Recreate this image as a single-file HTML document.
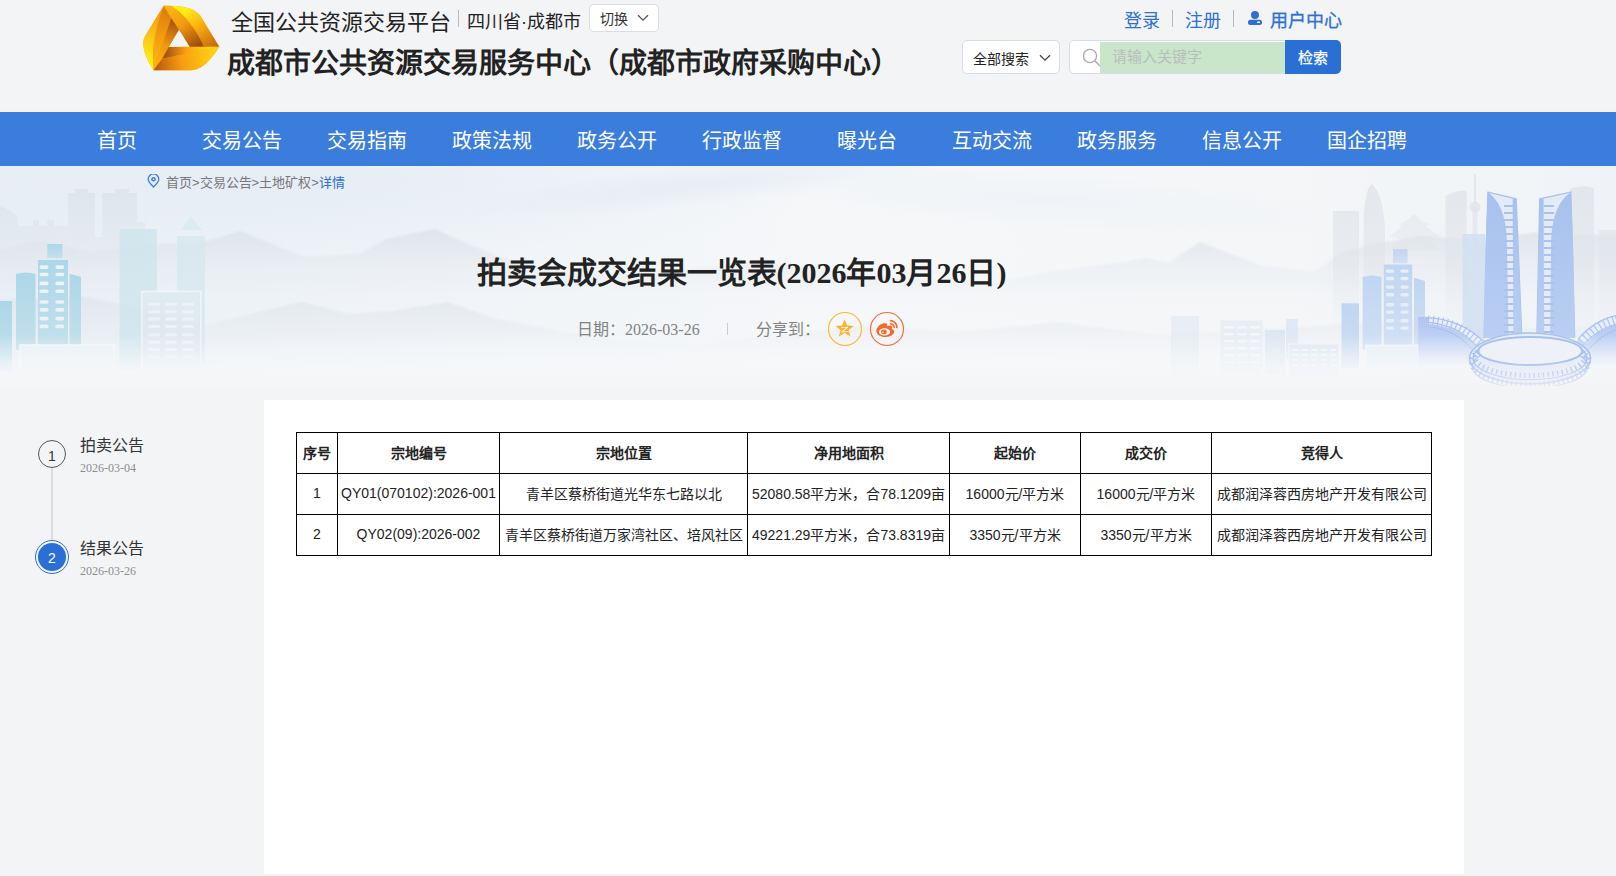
<!DOCTYPE html>
<html lang="zh-CN">
<head>
<meta charset="utf-8">
<title>拍卖会成交结果一览表</title>
<style>
html,body{margin:0;padding:0;}
body{width:1616px;height:876px;overflow:hidden;position:relative;background:#f3f4f6;font-family:"Liberation Sans",sans-serif;color:#333;}
.abs{position:absolute;white-space:nowrap;}
.serif{font-family:"Liberation Serif",serif;}
/* header */
#logo{left:140px;top:2px;width:82px;height:72px;}
#plat{left:231px;top:8px;font-size:22px;line-height:30px;color:#222;}
#sep1{left:458px;top:10px;width:1px;height:17px;background:#bbb;}
#city{left:467px;top:8px;font-size:18px;line-height:28px;color:#222;}
#switch{left:589px;top:4px;width:68px;height:26px;border:1px solid #d9dde6;border-radius:5px;background:#fff;}
#switch span{position:absolute;left:10px;top:5px;font-size:14px;line-height:18px;color:#333;}
#switch svg{position:absolute;left:47px;top:9px;}
#bigtitle{left:227px;top:45px;font-size:28px;line-height:38px;font-weight:bold;color:#222;}
.tl{position:absolute;top:7px;font-size:18px;line-height:28px;color:#2f6fd4;white-space:nowrap;}
.vsep{position:absolute;top:10px;width:1px;height:17px;background:#b5b8c0;}
#selbox{left:962px;top:40px;width:96px;height:32px;border:1px solid #d8dce6;border-radius:5px;background:#fff;}
#selbox span{position:absolute;left:10px;top:8px;font-size:14px;line-height:20px;color:#222;}
#selbox svg{position:absolute;left:76px;top:13px;}
#sinput{left:1069px;top:40px;width:230px;height:32px;border:1px solid #d8dce6;border-radius:5px 0 0 5px;background:#fff;}
#sinput svg{position:absolute;left:12px;top:7px;}
#sgreen{left:1100px;top:42px;width:185px;height:31px;background:#c9e6ca;}
#sgreen span{position:absolute;left:12px;top:5px;font-size:15px;line-height:20px;color:#b9bdbf;}
#sbtn{left:1285px;top:40px;width:56px;height:34px;background:#2a6fd4;border-radius:0 5px 5px 0;color:#fff;font-size:15px;}
#sbtn span{position:absolute;left:13px;top:8px;line-height:20px;-webkit-text-stroke:0.25px #fff;}
/* nav */
#nav{left:0;top:112px;width:1616px;height:54px;background:#3a7ddd;}
.ni{position:absolute;top:0;width:125px;text-align:center;color:#fff;font-size:20px;line-height:59px;}
/* banner */
#banner{left:0;top:166px;width:1616px;height:234px;}
#crumb{left:166px;top:174px;font-size:13px;line-height:18px;color:#777;}
#pin{left:147px;top:174px;}
#title{left:0;top:251px;width:1483px;text-align:center;font-size:30px;line-height:44px;font-weight:bold;color:#222;}
#meta{left:577px;top:319px;font-size:16px;line-height:22px;color:#828282;}
#msep{left:727px;top:323px;width:1px;height:12px;background:#ccc;}
#share{left:756px;top:319px;font-size:16px;line-height:22px;color:#828282;}
#qq{left:827px;top:311px;}
#wb{left:869px;top:311px;}
/* panel */
#panel{left:264px;top:400px;width:1200px;height:474px;background:#fff;}
table{position:absolute;left:32px;top:32px;border-collapse:collapse;table-layout:fixed;font-size:14px;color:#222;}
td{border:1px solid #000;height:40px;padding:0;text-align:center;white-space:nowrap;overflow:hidden;}
th{border:1px solid #000;height:40px;padding:0;text-align:center;font-weight:bold;}
th span,td span{position:relative;top:-1px;}
/* steps */
#steps .c1{position:absolute;left:38px;top:440px;width:26px;height:26px;border:1px solid #555;border-radius:50%;text-align:center;font-size:14px;line-height:30px;color:#333;}
#steps .line{position:absolute;left:51px;top:468px;width:2px;height:72px;background:#ddd;}
#steps .c2{position:absolute;left:35px;top:540px;width:34px;height:34px;border-radius:50%;border:1px solid #2a6fd6;box-sizing:border-box;}
#steps .c2 i{position:absolute;left:2px;top:2px;width:28px;height:28px;border-radius:50%;background:#2a6fd6;color:#fff;font-style:normal;text-align:center;font-size:14px;line-height:30px;}
#steps .t{position:absolute;left:80px;font-size:16px;line-height:22px;color:#333;}
#steps .d{position:absolute;left:80px;font-size:12px;line-height:16px;color:#8c8c8c;font-family:"Liberation Serif",serif;}
</style>
</head>
<body>
<!-- HEADER -->
<svg id="logo" class="abs" viewBox="0 0 998 876">
  <defs>
    <linearGradient id="gL1" gradientUnits="userSpaceOnUse" x1="60" y1="720" x2="300" y2="150"><stop offset="0" stop-color="#fff010"/><stop offset="0.45" stop-color="#fdc816"/><stop offset="1" stop-color="#f29a10"/></linearGradient>
    <linearGradient id="gL3" gradientUnits="userSpaceOnUse" x1="200" y1="780" x2="320" y2="120"><stop offset="0" stop-color="#fbb614"/><stop offset="0.5" stop-color="#f59e10"/><stop offset="1" stop-color="#e0800c"/></linearGradient>
    <linearGradient id="gL2" gradientUnits="userSpaceOnUse" x1="420" y1="220" x2="230" y2="720"><stop offset="0" stop-color="#a9520f"/><stop offset="0.6" stop-color="#f0960e"/><stop offset="1" stop-color="#fcac12"/></linearGradient>
    <linearGradient id="gT1" gradientUnits="userSpaceOnUse" x1="560" y1="80" x2="900" y2="540"><stop offset="0" stop-color="#fff014"/><stop offset="0.45" stop-color="#fbb012"/><stop offset="1" stop-color="#c96a0c"/></linearGradient>
    <linearGradient id="gT2" gradientUnits="userSpaceOnUse" x1="360" y1="80" x2="700" y2="540"><stop offset="0" stop-color="#fbb414"/><stop offset="0.45" stop-color="#f39a10"/><stop offset="1" stop-color="#9e4a0e"/></linearGradient>
    <linearGradient id="gB1" gradientUnits="userSpaceOnUse" x1="300" y1="600" x2="960" y2="560"><stop offset="0" stop-color="#a24e0e"/><stop offset="0.4" stop-color="#fba012"/><stop offset="1" stop-color="#ffec10"/></linearGradient>
    <linearGradient id="gB2" gradientUnits="userSpaceOnUse" x1="180" y1="780" x2="900" y2="650"><stop offset="0" stop-color="#b8580c"/><stop offset="0.45" stop-color="#f89c10"/><stop offset="1" stop-color="#ffd212"/></linearGradient>
  </defs>
  <path d="M290 45 C500 45 640 60 730 160 L965 545 C880 680 760 830 620 830 L165 830 C40 640 25 500 50 440 C90 370 160 250 290 45 Z M475 335 L350 548 L605 545 Z" fill="#f2a010" fill-rule="evenodd"/>
  <path d="M290 45 C160 250 90 370 50 440 C25 500 40 640 165 830 Q130 450 290 45 Z" fill="url(#gL1)"/>
  <path d="M290 45 Q130 450 165 830 L380 195 Z" fill="url(#gL3)"/>
  <path d="M380 195 L475 335 L350 548 L165 830 Z" fill="url(#gL2)"/>
  <path d="M290 45 C500 45 640 60 730 160 L965 545 L780 545 Q620 200 380 48 Z" fill="url(#gT1)"/>
  <path d="M290 45 L380 48 Q620 200 780 545 L605 545 L475 335 Z" fill="url(#gT2)"/>
  <path d="M350 548 L965 545 L270 690 Z" fill="url(#gB1)"/>
  <path d="M270 690 L965 545 C880 680 760 830 620 830 L165 830 Z" fill="url(#gB2)"/>
</svg>
<div id="plat" class="abs">全国公共资源交易平台</div>
<div id="sep1" class="abs"></div>
<div id="city" class="abs">四川省·成都市</div>
<div id="switch" class="abs"><span>切换</span><svg width="12" height="8" viewBox="0 0 12 8"><path d="M1 1.2 L6 6.2 L11 1.2" fill="none" stroke="#555" stroke-width="1.3"/></svg></div>
<div id="bigtitle" class="abs">成都市公共资源交易服务中心（成都市政府采购中心）</div>

<div class="tl" style="left:1124px">登录</div>
<div class="vsep" style="left:1172px"></div>
<div class="tl" style="left:1185px">注册</div>
<div class="vsep" style="left:1233px"></div>
<svg class="abs" style="left:1247px;top:10px" width="16" height="16" viewBox="0 0 16 16"><circle cx="8" cy="5" r="4" fill="#2f6fd4"/><rect x="1" y="9.8" width="14" height="5.1" rx="2.5" fill="#2f6fd4"/><rect x="9.9" y="11.4" width="3.2" height="1.7" rx="0.8" fill="#fff"/></svg>
<div class="tl" style="left:1270px;-webkit-text-stroke:0.3px #2f6fd4">用户中心</div>
<div id="selbox" class="abs"><span>全部搜索</span><svg width="12" height="8" viewBox="0 0 12 8"><path d="M1 1.2 L6 6.2 L11 1.2" fill="none" stroke="#444" stroke-width="1.3"/></svg></div>
<div id="sinput" class="abs"><svg width="20" height="20" viewBox="0 0 20 20"><circle cx="8" cy="8" r="6.6" fill="none" stroke="#a9acb2" stroke-width="1.4"/><path d="M12.8 12.8 L18 18" stroke="#a9acb2" stroke-width="1.5"/></svg></div>
<div id="sgreen" class="abs"><span>请输入关键字</span></div>
<div id="sbtn" class="abs"><span>检索</span></div>

<!-- NAV -->
<div id="nav" class="abs">
  <div class="ni" style="left:54px">首页</div>
  <div class="ni" style="left:179px">交易公告</div>
  <div class="ni" style="left:304px">交易指南</div>
  <div class="ni" style="left:429px">政策法规</div>
  <div class="ni" style="left:554px">政务公开</div>
  <div class="ni" style="left:679px">行政监督</div>
  <div class="ni" style="left:804px">曝光台</div>
  <div class="ni" style="left:929px">互动交流</div>
  <div class="ni" style="left:1054px">政务服务</div>
  <div class="ni" style="left:1179px">信息公开</div>
  <div class="ni" style="left:1304px">国企招聘</div>
</div>

<!-- BANNER -->
<svg id="banner" class="abs" width="1616" height="234" viewBox="0 166 1616 234">
  <defs>
    <linearGradient id="bgG" x1="0" y1="0" x2="1" y2="0">
      <stop offset="0" stop-color="#e9f0f6"/><stop offset="0.25" stop-color="#f0f4f8"/><stop offset="0.5" stop-color="#f5f7f9"/><stop offset="0.8" stop-color="#f4f6f8"/><stop offset="1" stop-color="#eff3f7"/>
    </linearGradient>
    <radialGradient id="topTint" cx="0.5" cy="0.5" r="0.5">
      <stop offset="0" stop-color="#dfe8f3" stop-opacity="0.55"/><stop offset="1" stop-color="#dfe8f3" stop-opacity="0"/>
    </radialGradient>
    <linearGradient id="grayFadeL" gradientUnits="userSpaceOnUse" x1="0" y1="189" x2="0" y2="300"><stop offset="0" stop-color="#dce2ea" stop-opacity="0.75"/><stop offset="0.5" stop-color="#e0e5eb" stop-opacity="0.5"/><stop offset="1" stop-color="#e6eaf0" stop-opacity="0"/></linearGradient>
    <linearGradient id="grayFadeR" gradientUnits="userSpaceOnUse" x1="0" y1="175" x2="0" y2="330"><stop offset="0" stop-color="#dde2e9" stop-opacity="0.75"/><stop offset="0.6" stop-color="#e1e5eb" stop-opacity="0.55"/><stop offset="1" stop-color="#e6eaf0" stop-opacity="0"/></linearGradient>
    <linearGradient id="wingG" gradientUnits="userSpaceOnUse" x1="0" y1="317" x2="0" y2="372"><stop offset="0" stop-color="#aec4f2"/><stop offset="0.6" stop-color="#c9d8f5"/><stop offset="1" stop-color="#eef2f9"/></linearGradient>
    <linearGradient id="fog2" gradientUnits="userSpaceOnUse" x1="0" y1="360" x2="0" y2="392"><stop offset="0" stop-color="#f3f4f6" stop-opacity="0"/><stop offset="1" stop-color="#f3f4f6" stop-opacity="0.9"/></linearGradient>
    <linearGradient id="mtnFar" gradientUnits="userSpaceOnUse" x1="0" y1="228" x2="0" y2="305"><stop offset="0" stop-color="#d9e0e8" stop-opacity="0.75"/><stop offset="0.45" stop-color="#e1e6ec" stop-opacity="0.45"/><stop offset="1" stop-color="#e8ecf0" stop-opacity="0"/></linearGradient>
    <linearGradient id="mtnNear" gradientUnits="userSpaceOnUse" x1="0" y1="296" x2="0" y2="360"><stop offset="0" stop-color="#dde3e9" stop-opacity="0.7"/><stop offset="0.5" stop-color="#e4e8ed" stop-opacity="0.4"/><stop offset="1" stop-color="#eceff2" stop-opacity="0"/></linearGradient>
    <filter id="soft" x="-5%" y="-20%" width="110%" height="140%"><feGaussianBlur stdDeviation="1.2"/></filter>
    <linearGradient id="fog" x1="0" y1="0" x2="0" y2="1">
      <stop offset="0" stop-color="#f6f8fa" stop-opacity="0"/><stop offset="0.6" stop-color="#f6f8fa" stop-opacity="0.8"/><stop offset="0.92" stop-color="#f5f6f8" stop-opacity="1"/><stop offset="1" stop-color="#f3f4f6" stop-opacity="1"/>
    </linearGradient>
    <linearGradient id="cyanG" x1="0" y1="0" x2="0" y2="1">
      <stop offset="0" stop-color="#acd7e8"/><stop offset="1" stop-color="#c4e0ec"/>
    </linearGradient>
    <linearGradient id="blueG" x1="0" y1="0" x2="0" y2="1">
      <stop offset="0" stop-color="#a7c1ee"/><stop offset="1" stop-color="#b9cff2"/>
    </linearGradient>
    <linearGradient id="lblueG" x1="0" y1="0" x2="0" y2="1">
      <stop offset="0" stop-color="#bfd5f1"/><stop offset="1" stop-color="#d2e1f3"/>
    </linearGradient>
  </defs>
  <rect x="0" y="166" width="1616" height="234" fill="url(#bgG)"/>
  <ellipse cx="300" cy="180" rx="520" ry="90" fill="url(#topTint)"/>
  <ellipse cx="700" cy="185" rx="260" ry="22" transform="rotate(-6 700 185)" fill="url(#topTint)"/>
  <ellipse cx="1050" cy="200" rx="300" ry="28" transform="rotate(4 1050 200)" fill="url(#topTint)" opacity="0.5"/>
  <!-- mountains far -->
  <path d="M0 250 L40 240 L90 252 L150 244 L200 243 L240 231 L277 246 L302 256 L330 256 L361 253 L386 239 L435 229 L457 239 L478 248 L497 256 L540 268 L602 274 L680 270 L760 262 L840 272 L930 280 L1000 282 L1052 271 L1118 263 L1147 258 L1168 263 L1200 242 L1228 253 L1263 266 L1315 271 L1341 253 L1368 245 L1420 236 L1480 240 L1540 232 L1616 236 V400 H0 Z" fill="url(#mtnFar)" filter="url(#soft)"/>
  <!-- mountains near -->
  <path d="M0 300 L80 296 L150 310 L200 327 L262 311 L302 302 L349 314 L392 311 L447 302 L494 318 L540 327 L602 339 L695 345 L780 335 L860 326 L960 332 L1060 322 L1160 335 L1280 328 L1400 320 L1500 330 L1616 326 V400 H0 Z" fill="url(#mtnNear)" filter="url(#soft)"/>
  <!-- left gray back buildings -->
  <g fill="url(#grayFadeL)">
    <path d="M0 205 L18 216 L18 226 L33 226 L33 220 L39 220 L39 226 L47 226 L47 220 L54 220 L54 226 L68 226 L68 193 L75 193 L75 189 L88 189 L88 193 L95 193 L95 237 L102 237 L102 193 L115 193 L115 189 L129 189 L129 193 L137 193 L137 222 L145 222 L145 320 L0 320 Z"/>
  </g>
  <!-- left cyan buildings -->
  <g fill="url(#cyanG)">
    <rect x="0" y="301" width="12" height="70"/>
    <path d="M16 274 Q26 271 35.5 274 L35.5 350 L16 350 Z"/>
    <rect x="38" y="260" width="30" height="90"/>
    <rect x="47.3" y="244" width="15.2" height="14"/>
    <path d="M69.6 273.7 L81 277 L81 350 L69.6 350 Z"/>
  </g>
  <g fill="#eaf4f8">
    <rect x="39.5" y="265.3" width="9" height="3.6" rx="1.8"/><rect x="55.3" y="265.3" width="9" height="3.6" rx="1.8"/>
    <rect x="39.5" y="272.7" width="9" height="3.6" rx="1.8"/><rect x="55.3" y="272.7" width="9" height="3.6" rx="1.8"/>
    <rect x="39.5" y="281.6" width="9" height="3.6" rx="1.8"/><rect x="55.3" y="281.6" width="9" height="3.6" rx="1.8"/>
    <rect x="39.5" y="289.5" width="9" height="3.6" rx="1.8"/><rect x="55.3" y="289.5" width="9" height="3.6" rx="1.8"/>
    <rect x="39.5" y="300.2" width="9" height="3.6" rx="1.8"/><rect x="55.3" y="300.2" width="9" height="3.6" rx="1.8"/>
    <rect x="39.5" y="308.1" width="9" height="3.6" rx="1.8"/><rect x="55.3" y="308.1" width="9" height="3.6" rx="1.8"/>
    <rect x="39.5" y="316.8" width="9" height="3.6" rx="1.8"/><rect x="55.3" y="316.8" width="9" height="3.6" rx="1.8"/>
    <rect x="39.5" y="324.6" width="9" height="3.6" rx="1.8"/><rect x="55.3" y="324.6" width="9" height="3.6" rx="1.8"/>
  </g>
  <rect x="20" y="345" width="94" height="25" fill="#e8f0f5" stroke="#f4f8fa" stroke-width="1.5"/>
  <g opacity="0.75">
    <rect x="119.5" y="229" width="37.5" height="140" fill="#cde5ee"/>
    <path d="M181 230 L191 216 L202 230 Z" fill="#d8eaf1"/>
    <rect x="177" y="236" width="28" height="130" fill="#d6e8f0"/>
    <rect x="141.8" y="291.5" width="59" height="78" fill="#dbe8ef" stroke="#f2f6f9" stroke-width="1.5"/>
  </g>
  <g fill="#eef4f7" opacity="0.9">
    <rect x="148" y="302.8" width="12" height="3" rx="1.5"/><rect x="165" y="302.8" width="12" height="3" rx="1.5"/><rect x="182" y="302.8" width="12" height="3" rx="1.5"/>
    <rect x="148" y="310.2" width="12" height="3" rx="1.5"/><rect x="165" y="310.2" width="12" height="3" rx="1.5"/><rect x="182" y="310.2" width="12" height="3" rx="1.5"/>
    <rect x="148" y="317.5" width="12" height="3" rx="1.5"/><rect x="165" y="317.5" width="12" height="3" rx="1.5"/><rect x="182" y="317.5" width="12" height="3" rx="1.5"/>
    <rect x="148" y="324.9" width="12" height="3" rx="1.5"/><rect x="165" y="324.9" width="12" height="3" rx="1.5"/><rect x="182" y="324.9" width="12" height="3" rx="1.5"/>
    <rect x="148" y="333.3" width="12" height="3" rx="1.5"/><rect x="165" y="333.3" width="12" height="3" rx="1.5"/><rect x="182" y="333.3" width="12" height="3" rx="1.5"/>
    <rect x="148" y="340.7" width="12" height="3" rx="1.5"/><rect x="165" y="340.7" width="12" height="3" rx="1.5"/><rect x="182" y="340.7" width="12" height="3" rx="1.5"/>
    <rect x="148" y="348" width="12" height="3" rx="1.5"/><rect x="165" y="348" width="12" height="3" rx="1.5"/><rect x="182" y="348" width="12" height="3" rx="1.5"/>
    <rect x="148" y="355.4" width="12" height="3" rx="1.5"/><rect x="165" y="355.4" width="12" height="3" rx="1.5"/><rect x="182" y="355.4" width="12" height="3" rx="1.5"/>
  </g>
  <!-- middle faint buildings right-center -->
  <g opacity="0.7">
    <rect x="1171" y="316" width="28" height="60" fill="#e3ebf3"/>
    <rect x="1220" y="320" width="43" height="55" fill="#e4ecf3" stroke="#f2f5f8" stroke-width="1"/>
    <rect x="1265" y="330" width="20" height="45" fill="#d6e4f3"/>
    <rect x="1286" y="319" width="12" height="40" fill="#d8e6f4"/>
    <rect x="1289" y="344" width="50" height="32" fill="#d7e4f4" stroke="#f2f5f8" stroke-width="1"/>
  </g>
  <g fill="#f7f9fc" opacity="0.8"><rect x="1224" y="326" width="10" height="2.6" rx="1.3"/><rect x="1224" y="333" width="10" height="2.6" rx="1.3"/><rect x="1224" y="340" width="10" height="2.6" rx="1.3"/><rect x="1224" y="347" width="10" height="2.6" rx="1.3"/><rect x="1224" y="354" width="10" height="2.6" rx="1.3"/><rect x="1224" y="361" width="10" height="2.6" rx="1.3"/><rect x="1237" y="326" width="10" height="2.6" rx="1.3"/><rect x="1237" y="333" width="10" height="2.6" rx="1.3"/><rect x="1237" y="340" width="10" height="2.6" rx="1.3"/><rect x="1237" y="347" width="10" height="2.6" rx="1.3"/><rect x="1237" y="354" width="10" height="2.6" rx="1.3"/><rect x="1237" y="361" width="10" height="2.6" rx="1.3"/><rect x="1250" y="326" width="10" height="2.6" rx="1.3"/><rect x="1250" y="333" width="10" height="2.6" rx="1.3"/><rect x="1250" y="340" width="10" height="2.6" rx="1.3"/><rect x="1250" y="347" width="10" height="2.6" rx="1.3"/><rect x="1250" y="354" width="10" height="2.6" rx="1.3"/><rect x="1250" y="361" width="10" height="2.6" rx="1.3"/><rect x="1292.0" y="349" width="6.5" height="2" rx="1"/><rect x="1292.0" y="354" width="6.5" height="2" rx="1"/><rect x="1292.0" y="359" width="6.5" height="2" rx="1"/><rect x="1292.0" y="364" width="6.5" height="2" rx="1"/><rect x="1301.5" y="349" width="6.5" height="2" rx="1"/><rect x="1301.5" y="354" width="6.5" height="2" rx="1"/><rect x="1301.5" y="359" width="6.5" height="2" rx="1"/><rect x="1301.5" y="364" width="6.5" height="2" rx="1"/><rect x="1311.0" y="349" width="6.5" height="2" rx="1"/><rect x="1311.0" y="354" width="6.5" height="2" rx="1"/><rect x="1311.0" y="359" width="6.5" height="2" rx="1"/><rect x="1311.0" y="364" width="6.5" height="2" rx="1"/><rect x="1320.5" y="349" width="6.5" height="2" rx="1"/><rect x="1320.5" y="354" width="6.5" height="2" rx="1"/><rect x="1320.5" y="359" width="6.5" height="2" rx="1"/><rect x="1320.5" y="364" width="6.5" height="2" rx="1"/><rect x="1330.0" y="349" width="6.5" height="2" rx="1"/><rect x="1330.0" y="354" width="6.5" height="2" rx="1"/><rect x="1330.0" y="359" width="6.5" height="2" rx="1"/><rect x="1330.0" y="364" width="6.5" height="2" rx="1"/></g>
  <!-- right gray back buildings -->
  <g fill="url(#grayFadeR)">
    <rect x="1333" y="211" width="26" height="150"/>
    <path d="M1363.6 360 L1363.6 215 Q1366 186 1372 184 Q1384 196 1385 232 L1385 360 Z"/>
    <path d="M1445.5 360 L1445.5 196 Q1456 190 1466.6 191 L1466.6 360 Z"/>
    <rect x="1474" y="174" width="2" height="30"/>
    <circle cx="1475" cy="207" r="5.5"/>
    <rect x="1472.5" y="207" width="5" height="50"/>
    <path d="M1389 236 Q1396 232 1402 226 L1399 224 Q1408 221 1414 214 Q1420 221 1429 224 L1426 226 Q1432 232 1440 236 Q1432 238 1428 240 Q1436 244 1440 250 L1390 250 Q1394 244 1402 240 Q1396 238 1389 236 Z" opacity="0.7"/>
    <path d="M1570 360 L1570 189 Q1582 184 1594 188 L1594 360 Z"/>
    <rect x="1599" y="230" width="17" height="130"/>
  </g>
  <!-- right light blue buildings -->
  <g fill="url(#lblueG)">
    <rect x="1341.5" y="303.3" width="17.5" height="65"/>
    <path d="M1362.6 277 Q1372 274 1381.5 277 L1381.5 350 L1362.6 350 Z"/>
    <rect x="1383.8" y="264.5" width="28.4" height="85"/>
    <rect x="1393" y="249.2" width="14.5" height="14"/>
    <path d="M1414 277.6 L1425 281 L1425 350 L1414 350 Z"/>
  </g>
  <rect x="1462.6" y="234" width="22.4" height="130" fill="#cfdff0" opacity="0.8"/>
  <g fill="#e6eef8">
    <rect x="1385.8" y="269.4" width="8.4" height="3.4" rx="1.7"/><rect x="1400.3" y="269.4" width="8.4" height="3.4" rx="1.7"/>
    <rect x="1385.8" y="276.8" width="8.4" height="3.4" rx="1.7"/><rect x="1400.3" y="276.8" width="8.4" height="3.4" rx="1.7"/>
    <rect x="1385.8" y="285.4" width="8.4" height="3.4" rx="1.7"/><rect x="1400.3" y="285.4" width="8.4" height="3.4" rx="1.7"/>
    <rect x="1385.8" y="293.1" width="8.4" height="3.4" rx="1.7"/><rect x="1400.3" y="293.1" width="8.4" height="3.4" rx="1.7"/>
    <rect x="1385.8" y="303.1" width="8.4" height="3.4" rx="1.7"/><rect x="1400.3" y="303.1" width="8.4" height="3.4" rx="1.7"/>
    <rect x="1385.8" y="310.4" width="8.4" height="3.4" rx="1.7"/><rect x="1400.3" y="310.4" width="8.4" height="3.4" rx="1.7"/>
    <rect x="1385.8" y="319.1" width="8.4" height="3.4" rx="1.7"/><rect x="1400.3" y="319.1" width="8.4" height="3.4" rx="1.7"/>
    <rect x="1385.8" y="326.4" width="8.4" height="3.4" rx="1.7"/><rect x="1400.3" y="326.4" width="8.4" height="3.4" rx="1.7"/>
  </g>
  <rect x="1366" y="345.4" width="52" height="22" fill="#e6eef7" stroke="#f3f6fa" stroke-width="1.5"/>
  <!-- twin towers -->
  <path d="M1487.9 192.2 L1516.2 198.8 L1521.8 337 L1484.1 337 Z" fill="#e4ebf7" stroke="#a9c2ee" stroke-width="1.3"/>
  <path d="M1487.9 192.2 Q1505 204 1506.8 238 L1508.6 337 L1484.1 337 Q1484.5 250 1487.9 192.2 Z" fill="url(#blueG)"/>
  <path d="M1512.6 199 L1516.2 198.8 L1521.8 337 L1513.4 337 Z" fill="url(#blueG)"/>
  <path d="M1504 206 H1514 M1504 213 H1514 M1504 220 H1514 M1504 227 H1514 M1504 234 H1514 M1504 241 H1514 M1504 248 H1514 M1504 255 H1514 M1504 262 H1514 M1504 269 H1514 M1504 276 H1514 M1504 283 H1514 M1504 290 H1514 M1504 297 H1514 M1504 304 H1514 M1504 311 H1514 M1504 318 H1514 M1504 325 H1514 M1504 332 H1514" stroke="#a9c2ee" stroke-width="1.9"/>
  <path d="M1570.8 192.2 L1539.7 198.8 L1536.9 337 L1574.6 337 Z" fill="#e4ebf7" stroke="#a9c2ee" stroke-width="1.3"/>
  <path d="M1570.8 192.2 Q1553 204 1551.2 238 L1550 337 L1574.6 337 Q1574.2 250 1570.8 192.2 Z" fill="url(#blueG)"/>
  <path d="M1543.6 199 L1539.7 198.8 L1536.9 337 L1544.2 337 Z" fill="url(#blueG)"/>
  <path d="M1544 206 H1554 M1544 213 H1554 M1544 220 H1554 M1544 227 H1554 M1544 234 H1554 M1544 241 H1554 M1544 248 H1554 M1544 255 H1554 M1544 262 H1554 M1544 269 H1554 M1544 276 H1554 M1544 283 H1554 M1544 290 H1554 M1544 297 H1554 M1544 304 H1554 M1544 311 H1554 M1544 318 H1554 M1544 325 H1554 M1544 332 H1554" stroke="#a9c2ee" stroke-width="1.9"/>
  <!-- wings -->
  <path d="M1418.3 317 Q1458 315 1485 343 L1470 357 L1469 372 L1418.3 371 Z" fill="url(#wingG)"/>
  <path d="M1428 320 Q1461 322 1482 346" fill="none" stroke="#e8eef9" stroke-width="8"/>
  <path d="M1426 317.6 Q1462 319 1485 343 M1428 322.4 Q1460 325 1479 349 M1430 327 Q1458 330 1475 353" fill="none" stroke="#a9c1ee" stroke-width="1.1"/>
  <path d="M1428 320 Q1461 322 1482 346" fill="none" stroke="#a9c1ee" stroke-width="9" stroke-dasharray="1.1 3.6"/>
  <path d="M1577 341 Q1594 320 1616 316 L1616 372 L1588 368 Z" fill="url(#wingG)"/>
  <path d="M1582 342 Q1597 325 1616 320" fill="none" stroke="#e8eef9" stroke-width="8"/>
  <path d="M1578 339 Q1594 320 1616 315.5 M1583 345 Q1599 328 1616 324.5 M1588 350 Q1602 334 1616 330" fill="none" stroke="#a9c1ee" stroke-width="1.1"/>
  <path d="M1582 342 Q1597 325 1616 320" fill="none" stroke="#a9c1ee" stroke-width="9" stroke-dasharray="1.1 3.6"/>
  <!-- fog -->
  <rect x="0" y="335" width="1616" height="52" fill="url(#fog)"/>
  <!-- stadium -->
  <ellipse cx="1530" cy="358.5" rx="60.5" ry="25.5" fill="#e6ecf8" stroke="#a9c1ee" stroke-width="1.5"/>
  <ellipse cx="1530" cy="358.5" rx="56.8" ry="21.2" fill="none" stroke="#a9c1ee" stroke-width="1.2"/>
  <ellipse cx="1530" cy="362" rx="58.6" ry="22.5" fill="none" stroke="#a9c1ee" stroke-width="5" stroke-dasharray="1.3 3.4"/>
  <ellipse cx="1530" cy="357" rx="55" ry="18.5" fill="none" stroke="#a9c1ee" stroke-width="5" stroke-dasharray="1.3 3.4"/>
  <ellipse cx="1530" cy="366.5" rx="57.6" ry="21.6" fill="none" stroke="#a9c1ee" stroke-width="1.1"/>
  <ellipse cx="1530.2" cy="351" rx="52" ry="14" fill="#eef2f8" stroke="#a9c1ee" stroke-width="2"/>
  <rect x="1400" y="360" width="216" height="32" fill="url(#fog2)"/>
  <rect x="0" y="386" width="1616" height="14" fill="#f3f4f6"/>
</svg>
<svg id="pin" class="abs" width="13" height="14" viewBox="0 0 13 14"><path d="M6.5 13 C3 9.5 1.2 7.2 1.2 5.2 A5.3 5.3 0 0 1 11.8 5.2 C11.8 7.2 10 9.5 6.5 13 Z" fill="none" stroke="#3a7ddd" stroke-width="1.3"/><circle cx="6.5" cy="5.2" r="2.3" fill="#3a7ddd"/><circle cx="6.5" cy="5.2" r="0.8" fill="#fff"/></svg>
<div id="crumb" class="abs">首页&gt;交易公告&gt;土地矿权&gt;<span style="color:#2d6fd2">详情</span></div>
<div id="title" class="abs"><span class="serif">拍卖会成交结果一览表(2026年03月26日)</span></div>
<div id="meta" class="abs">日期：<span class="serif">2026-03-26</span></div>
<div id="msep" class="abs"></div>
<div id="share" class="abs">分享到：</div>
<svg id="qq" class="abs" width="36" height="36" viewBox="0 0 36 36"><circle cx="18" cy="18" r="16.5" fill="none" stroke="#fbb735" stroke-width="1.2"/><path d="M17.6 8.2 L20.1 14.6 L26.8 14.9 L21.6 19 L23.4 25.6 L17.6 22 L11.8 25.6 L13.6 19 L8.4 14.9 L15.1 14.6 Z" fill="#fbb32c"/><path d="M14.2 16.6 L20.8 16.4 L14.6 20.8 L21.6 20.6" fill="none" stroke="#fff" stroke-width="0.9"/></svg>
<svg id="wb" class="abs" width="36" height="36" viewBox="0 0 36 36"><circle cx="18" cy="18" r="16.5" fill="none" stroke="#f4703a" stroke-width="1.2"/><path d="M14 12.4 C10.6 13.2 7.4 16.6 7.4 20 C7.4 23.8 11.6 26 16.4 26 C21.8 26 25.2 23.2 25.2 20.6 C25.2 19 23.8 18.2 22.8 17.9 C23.3 16.6 23.4 15.2 22 14.7 C20.8 14.3 19.2 14.8 18.2 15.3 C18.5 14 18.4 12.9 17.4 12.5 C16.6 12.2 15.4 12.1 14 12.4 Z" fill="#f4692d"/><ellipse cx="15.5" cy="20.9" rx="5.6" ry="3.6" fill="#fff"/><ellipse cx="14.9" cy="20.9" rx="2.9" ry="2.3" fill="#f4692d"/><circle cx="14" cy="21.3" r="0.8" fill="#fff"/><path d="M21.4 12.8 A3.8 3.8 0 0 1 25.3 16.5" fill="none" stroke="#f4692d" stroke-width="1.5" stroke-linecap="round"/><path d="M21.6 9.6 A6.6 6.6 0 0 1 27.8 16.4" fill="none" stroke="#f4692d" stroke-width="1.8" stroke-linecap="round"/></svg>

<!-- STEPS -->
<div id="steps">
  <div class="c1">1</div>
  <div class="line"></div>
  <div class="c2"><i>2</i></div>
  <div class="t" style="top:435px">拍卖公告</div>
  <div class="d" style="top:460px">2026-03-04</div>
  <div class="t" style="top:538px">结果公告</div>
  <div class="d" style="top:563px">2026-03-26</div>
</div>

<!-- PANEL -->
<div id="panel" class="abs">
<table>
  <colgroup><col style="width:41px"><col style="width:162px"><col style="width:248px"><col style="width:202px"><col style="width:131px"><col style="width:131px"><col style="width:220px"></colgroup>
  <tr><th><span>序号</span></th><th><span>宗地编号</span></th><th><span>宗地位置</span></th><th><span>净用地面积</span></th><th><span>起始价</span></th><th><span>成交价</span></th><th><span>竞得人</span></th></tr>
  <tr><td><span>1</span></td><td><span>QY01(070102):2026-001</span></td><td><span>青羊区蔡桥街道光华东七路以北</span></td><td><span>52080.58平方米，合78.1209亩</span></td><td><span>16000元/平方米</span></td><td><span>16000元/平方米</span></td><td><span>成都润泽蓉西房地产开发有限公司</span></td></tr>
  <tr><td><span>2</span></td><td><span>QY02(09):2026-002</span></td><td><span>青羊区蔡桥街道万家湾社区、培风社区</span></td><td><span>49221.29平方米，合73.8319亩</span></td><td><span>3350元/平方米</span></td><td><span>3350元/平方米</span></td><td><span>成都润泽蓉西房地产开发有限公司</span></td></tr>
</table>
</div>
</body>
</html>
